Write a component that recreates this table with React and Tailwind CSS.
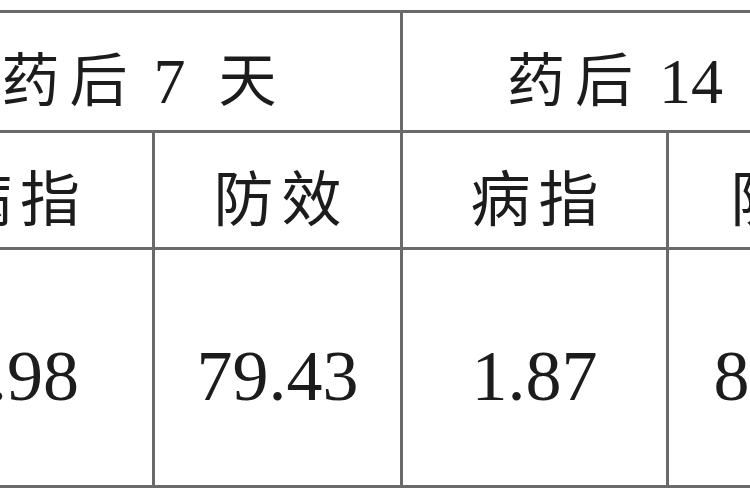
import React from 'react';

const cjk = { fontFamily: '"Liberation Serif", "Noto Sans CJK SC", serif' };

const groups = [
  { pre: '药后', num: '7', cols: [{ head: '病指', val: '1.98', w: 'w-[272px]' }, { head: '防效', val: '79.43', w: 'flex-1' }] },
  { pre: '药后', num: '14', cols: [{ head: '病指', val: '1.87', w: 'w-[263px]' }, { head: '防效', val: '80.53', w: 'flex-1' }] },
];

const App = () => {
  return (
    <div className="w-[750px] h-[500px] overflow-hidden bg-white pt-[10px] text-[#1c1c1c]" style={cjk}>
      <div className="ml-[-120px] w-[1050px] flex border-t-[3px] border-b-[3px] border-[#6a6a6a]">
        {groups.map((g, i) => (
          <div key={i} className={`w-[520px] flex flex-col ${i > 0 ? 'border-l-[3px] border-[#6a6a6a]' : ''}`}>
            <div className="h-[120px] flex items-center justify-center pt-[20px] pr-[2px] text-[58px] leading-none border-b-[3px] border-[#6a6a6a]">
              <span className="tracking-[10px]">{g.pre}</span>
              <span className="ml-[16px] text-[64px]">{g.num}</span>
              <span className="ml-[33px]">天</span>
            </div>
            <div className="flex h-[117px] border-b-[3px] border-[#6a6a6a]">
              {g.cols.map((c, j) => (
                <div key={j} className={`${c.w} flex items-center justify-center pt-[22px] pl-[8px] text-[60px] leading-none tracking-[8px] ${j > 0 ? 'border-l-[3px] border-[#6a6a6a]' : ''}`}>
                  {c.head}
                </div>
              ))}
            </div>
            <div className="flex h-[235px]">
              {g.cols.map((c, j) => (
                <div key={j} className={`${c.w} flex items-center justify-center pt-[16px] text-[72px] leading-none ${j > 0 ? 'border-l-[3px] border-[#6a6a6a]' : ''}`}>
                  {c.val}
                </div>
              ))}
            </div>
          </div>
        ))}
      </div>
    </div>
  );
};

export default App;
